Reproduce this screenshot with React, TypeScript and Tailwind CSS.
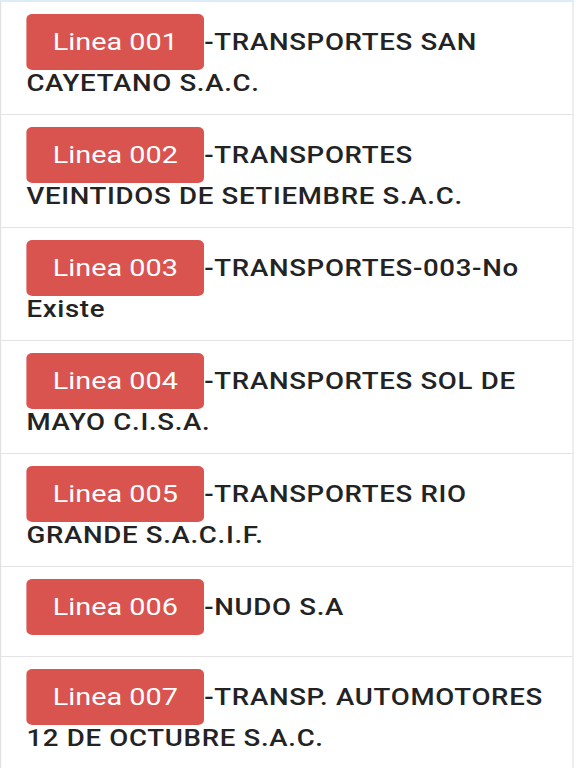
const lineas = [
  { code: "001", name: "TRANSPORTES SAN CAYETANO S.A.C." },
  { code: "002", name: "TRANSPORTES VEINTIDOS DE SETIEMBRE S.A.C." },
  { code: "003", name: "TRANSPORTES-003-No Existe" },
  { code: "004", name: "TRANSPORTES SOL DE MAYO C.I.S.A." },
  { code: "005", name: "TRANSPORTES RIO GRANDE S.A.C.I.F." },
  { code: "006", name: "NUDO S.A" },
  { code: "007", name: "TRANSP. AUTOMOTORES 12 DE OCTUBRE S.A.C." },
];

// the capture is stretched sideways, so the list is laid out at 480px and widened
export default function App() {
  return (
    <div className="min-h-[768px] w-[576px] overflow-hidden bg-white font-['Roboto',sans-serif]">
      <ul className="w-[478px] origin-left scale-x-[1.2] border-x border-t-2 border-x-[#e2e2e2] border-t-[#dcedf9]">
        {lineas.map((l) => (
          <li
            key={l.code}
            className="min-h-[90px] border-b border-[#e4e4e4] px-[21px] pb-[10px] pt-[20px] text-[23px] font-medium leading-[41px] tracking-[0.025em] text-[#232323]"
          >
            <span className="rounded-[5px] bg-[#d9534f] px-[22px] py-[14px] text-[24px] font-normal leading-[41px] tracking-normal text-white">
              Linea {l.code}
            </span>
            -{l.name}
          </li>
        ))}
      </ul>
    </div>
  );
}
